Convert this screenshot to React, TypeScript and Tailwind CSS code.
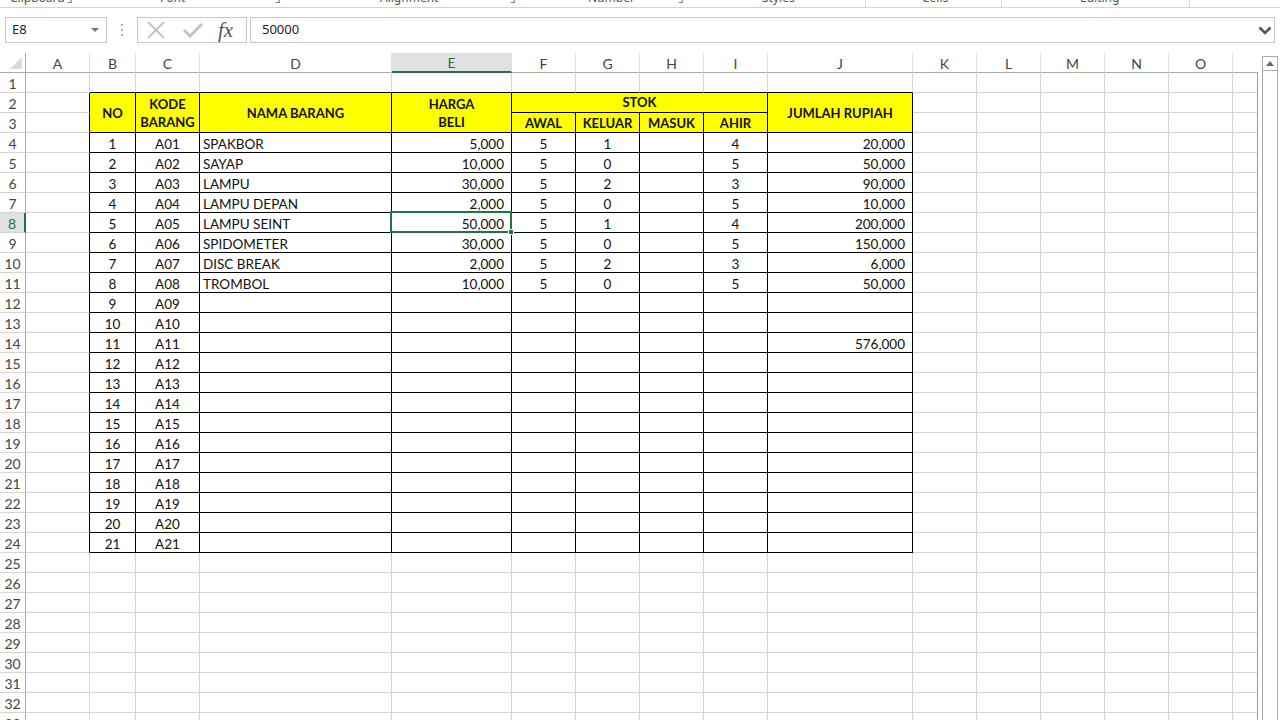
import clsx from "clsx"

// === Sheet geometry ===
const colW = [
  "w-[64px]", "w-[46px]", "w-[64px]", "w-[192px]", "w-[120px]",
  "w-[64px]", "w-[64px]", "w-[64px]", "w-[64px]", "w-[145px]",
  "w-[64px]", "w-[64px]", "w-[64px]", "w-[64px]", "w-[64px]", "w-[25px]",
]
const letters = ["A", "B", "C", "D", "E", "F", "G", "H", "I", "J", "K", "L", "M", "N", "O", ""]
const align = [
  "justify-center", "justify-center", "justify-center", "justify-start pl-[3px]", "justify-end pr-[7px]",
  "justify-center", "justify-center", "justify-center", "justify-center", "justify-end pr-[7px]",
  "justify-center", "justify-center", "justify-center", "justify-center", "justify-center", "justify-center",
]

// === Data ===
const items = [
  ["1", "A01", "SPAKBOR", "5,000", "5", "1", "", "4", "20,000"],
  ["2", "A02", "SAYAP", "10,000", "5", "0", "", "5", "50,000"],
  ["3", "A03", "LAMPU", "30,000", "5", "2", "", "3", "90,000"],
  ["4", "A04", "LAMPU DEPAN", "2,000", "5", "0", "", "5", "10,000"],
  ["5", "A05", "LAMPU SEINT", "50,000", "5", "1", "", "4", "200,000"],
  ["6", "A06", "SPIDOMETER", "30,000", "5", "0", "", "5", "150,000"],
  ["7", "A07", "DISC BREAK", "2,000", "5", "2", "", "3", "6,000"],
  ["8", "A08", "TROMBOL", "10,000", "5", "0", "", "5", "50,000"],
]

function rowValues(r: number): string[] {
  if (r >= 4 && r <= 11) return items[r - 4]
  if (r >= 12 && r <= 24) {
    const n = r - 3
    return [String(n), "A" + String(n).padStart(2, "0"), "", "", "", "", "", "", r === 14 ? "576,000" : ""]
  }
  return []
}

const ribbon = [
  { w: "w-[67px]", pl: "pl-[10px]", label: "Clipboard" },
  { w: "w-[93px]", pl: "", label: "⌟" },
  { w: "w-[115px]", pl: "", label: "Font" },
  { w: "w-[105px]", pl: "", label: "⌟" },
  { w: "w-[130px]", pl: "", label: "Alignment" },
  { w: "w-[78px]", pl: "", label: "⌟" },
  { w: "w-[90px]", pl: "", label: "Number" },
  { w: "w-[84px]", pl: "", label: "⌟" },
  { w: "w-[104px] border-r border-r-[#d5d5d5]", pl: "", label: "Styles" },
  { w: "w-[56px]", pl: "", label: "" },
  { w: "w-[80px] border-r border-r-[#d5d5d5]", pl: "", label: "Cells" },
  { w: "w-[78px]", pl: "", label: "" },
  { w: "w-[110px] border-r border-r-[#d5d5d5]", pl: "", label: "Editing" },
  { w: "w-[52px]", pl: "", label: "" },
  { w: "w-[20px]", pl: "", label: "^" },
]

function Cell({ c, r, children }: { c: number; r: number; children?: React.ReactNode }) {
  const inTable = r >= 2 && r <= 24
  const right = c === 15 ? "border-r-[#9b9b9b]" : inTable && c <= 9 ? "border-r-black" : "border-r-[#d4d4d4]"
  const bottom = r <= 24 && c >= 1 && c <= 9 ? "border-b-black" : "border-b-[#d4d4d4]"
  const selected = r === 8 && c === 4
  return (
    <div
      className={clsx(
        "relative flex h-[20px] shrink-0 items-center whitespace-nowrap border-r border-b pt-[3px] text-[13.5px] text-[#111]",
        colW[c], align[c], right, bottom
      )}
    >
      {children}
      {selected && (
        <>
          <div className="absolute left-[-2px] top-[-2px] z-10 h-[22px] w-[122px] border-2 border-[#217346]" />
          <div className="absolute left-[116px] top-[16px] z-20 h-[6px] w-[6px] border border-white bg-[#217346]" />
        </>
      )}
    </div>
  )
}

function RowHead({ n }: { n: number }) {
  const sel = n === 8
  return (
    <div
      className={clsx(
        "flex h-[20px] w-[26px] shrink-0 items-center justify-center border-b border-b-[#d4d4d4] pt-[2px] text-[14px]",
        sel ? "border-r-2 border-r-[#217346] bg-[#e1e1e1] text-[#217346]" : "border-r border-r-[#ababab] text-[#444]"
      )}
    >
      {n}
    </div>
  )
}

function Row({ r }: { r: number }) {
  const vals = rowValues(r)
  return (
    <div className="flex">
      <RowHead n={r} />
      {colW.map((_, c) => (
        <Cell key={c} c={c} r={r}>
          {c >= 1 && c <= 9 ? vals[c - 1] : null}
        </Cell>
      ))}
    </div>
  )
}

// header block: rows 2 and 3
function HeaderRows() {
  const yel = "flex shrink-0 flex-col items-center justify-center border-r border-b border-r-black border-b-black bg-[#ffff00] font-bold text-[13px] text-[#111]"
  const plain = (c: number, r: number) => <Cell c={c} r={r} />
  return (
    <div className="flex">
      <div className="flex flex-col">
        <RowHead n={2} />
        <RowHead n={3} />
      </div>
      <div className="flex flex-col">
        {plain(0, 2)}
        {plain(0, 3)}
      </div>
      <div className={clsx(yel, "h-[40px] w-[46px] pt-[2px]")}>NO</div>
      <div className={clsx(yel, "h-[40px] w-[64px]")}>
        <span className="flex h-[20px] items-center pt-[3px]">KODE</span>
        <span className="flex h-[19px] items-center pt-[1px]">BARANG</span>
      </div>
      <div className={clsx(yel, "h-[40px] w-[192px] pt-[2px]")}>NAMA BARANG</div>
      <div className={clsx(yel, "h-[40px] w-[120px]")}>
        <span className="flex h-[20px] items-center pt-[3px]">HARGA</span>
        <span className="flex h-[19px] items-center pt-[1px]">BELI</span>
      </div>
      <div className="flex w-[256px] shrink-0 flex-col">
        <div className={clsx(yel, "h-[20px] w-[256px] pt-[1px]")}>STOK</div>
        <div className="flex">
          {["AWAL", "KELUAR", "MASUK", "AHIR"].map((t) => (
            <div key={t} className={clsx(yel, "h-[20px] w-[64px] pt-[2px]")}>{t}</div>
          ))}
        </div>
      </div>
      <div className={clsx(yel, "h-[40px] w-[145px] pt-[2px]")}>JUMLAH RUPIAH</div>
      {[10, 11, 12, 13, 14, 15].map((c) => (
        <div key={c} className="flex flex-col">
          {plain(c, 2)}
          {plain(c, 3)}
        </div>
      ))}
    </div>
  )
}

export default function App() {
  const rows = Array.from({ length: 33 }, (_, i) => i + 1)
  return (
    <div className="relative h-[720px] w-[1280px] overflow-hidden bg-white font-['Lato',sans-serif]">
      {/* === Ribbon bottom (group labels cut off) === */}
      <div className="h-[8px] overflow-hidden border-b border-b-[#d5d5d5]">
        <div className="mt-[-10px] flex h-[17px] font-['Noto_Sans',sans-serif] text-[12px] leading-[16px] text-[#555]">
          {ribbon.map((g, i) => (
            <div key={i} className={clsx("shrink-0", g.w, g.pl)}>
              {g.label}
            </div>
          ))}
        </div>
      </div>

      {/* === Formula bar === */}
      <div className="mt-[9px] flex h-[26px] items-stretch font-['Noto_Sans',sans-serif]">
        <div className="ml-[5px] flex w-[102px] shrink-0 items-center justify-between border border-[#c6c6c6] pl-[6px] pr-[7px] text-[13px] text-[#222]">
          <span>E8</span>
          <svg width="8" height="5" viewBox="0 0 8 5">
            <path d="M0 0 L8 0 L4 4 Z" fill="#777" />
          </svg>
        </div>
        <div className="flex w-[30px] shrink-0 items-center justify-center">
          <svg width="4" height="14" viewBox="0 0 4 14">
            <circle cx="2" cy="2" r="1" fill="#999" />
            <circle cx="2" cy="7" r="1" fill="#999" />
            <circle cx="2" cy="12" r="1" fill="#999" />
          </svg>
        </div>
        <div className="flex w-[110px] shrink-0 items-center border border-[#c6c6c6] pl-[8px]">
          <svg width="20" height="18" viewBox="0 0 20 18">
            <path d="M2 1 L18 17 M18 1 L2 17" stroke="#c4c4c4" strokeWidth="2" fill="none" />
          </svg>
          <svg className="ml-[17px]" width="20" height="16" viewBox="0 0 20 16">
            <path d="M1 8 L7 14 L19 2" stroke="#c4c4c4" strokeWidth="3" fill="none" />
          </svg>
          <span className="ml-[15px] font-['Liberation_Serif',serif] text-[21px] italic leading-none text-[#555]">fx</span>
        </div>
        <div className="ml-[3px] mr-[5px] flex flex-1 items-center justify-between border border-[#c6c6c6] pl-[11px] pr-[2px] text-[13px] text-[#222]">
          <span>50000</span>
          <svg width="14" height="9" viewBox="0 0 14 9">
            <path d="M1.5 1.5 L7 7 L12.5 1.5" stroke="#555" strokeWidth="2.6" fill="none" />
          </svg>
        </div>
      </div>

      {/* === Sheet === */}
      <div className="mt-[10px] flex">
        <div className="w-[1259px] shrink-0">
          {/* column headers */}
          <div className="flex h-[20px]">
            <div className="flex w-[26px] shrink-0 items-end justify-end border-r border-b border-r-[#ababab] border-b-[#ababab] pb-[3px] pr-[3px]">
              <svg width="12" height="12" viewBox="0 0 12 12">
                <path d="M12 0 L12 12 L0 12 Z" fill="#dadada" />
              </svg>
            </div>
            {letters.map((l, c) => (
              <div
                key={c}
                className={clsx(
                  "flex h-[20px] shrink-0 items-center justify-center pt-[1px] text-[14px]",
                  colW[c],
                  c < 15 && "border-r border-r-[#e1e1e1]",
                  c === 4
                    ? "border-b-2 border-b-[#217346] bg-[#e1e1e1] text-[#217346]"
                    : "border-b border-b-[#ababab] text-[#444]"
                )}
              >
                {l}
              </div>
            ))}
          </div>
          {rows.map((r) =>
            r === 2 ? <HeaderRows key={r} /> : r === 3 ? null : <Row key={r} r={r} />
          )}
        </div>

        {/* vertical scrollbar */}
        <div className="ml-[3px] mt-[3px] flex w-[16px] shrink-0 flex-col border-x border-t border-[#ababab]">
          <div className="flex h-[14px] items-center justify-center border-b border-b-[#ababab]">
            <svg width="8" height="5" viewBox="0 0 8 5">
              <path d="M4 0 L8 5 L0 5 Z" fill="#666" />
            </svg>
          </div>
        </div>
      </div>
    </div>
  )
}
